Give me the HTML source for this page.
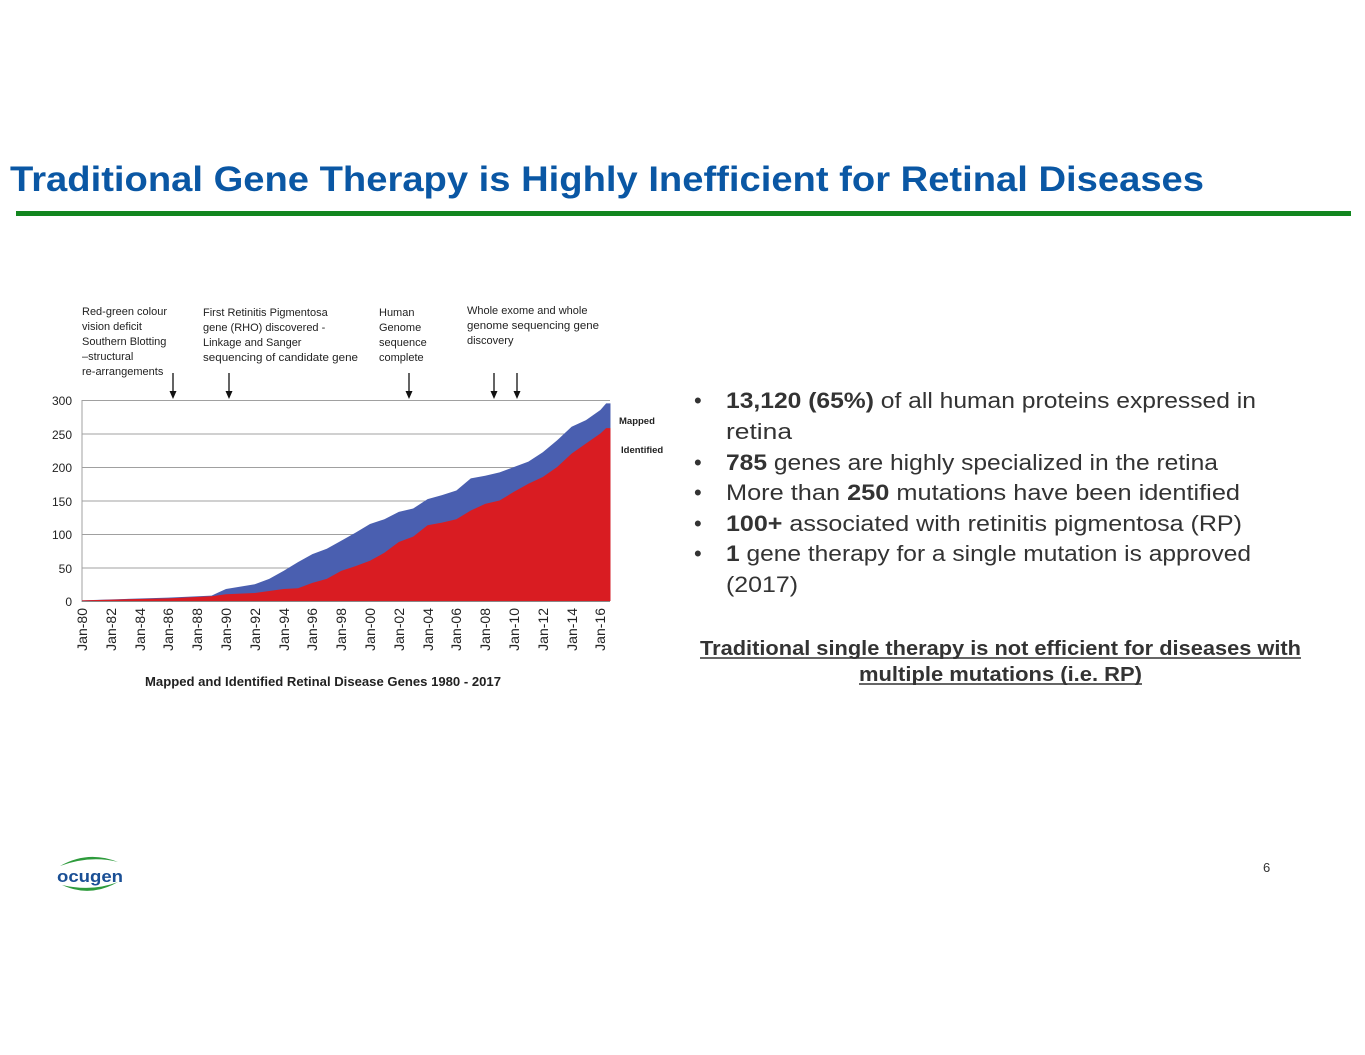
<!DOCTYPE html>
<html><head><meta charset="utf-8"><style>
html,body{margin:0;padding:0;background:#fff;}
svg{display:block;}
text{font-family:"Liberation Sans",sans-serif;}
</style></head><body>
<svg width="1365" height="1055" viewBox="0 0 1365 1055" xmlns="http://www.w3.org/2000/svg">
<text x="10" y="191" font-size="35" font-weight="bold" fill="#0a57a4" textLength="1194" lengthAdjust="spacingAndGlyphs">Traditional Gene Therapy is Highly Inefficient for Retinal Diseases</text>
<rect x="16" y="211" width="1335" height="5" fill="#12861f"/>

<g font-size="11" fill="#222">
<text x="82" y="315">Red-green colour</text>
<text x="82" y="330">vision deficit</text>
<text x="82" y="345">Southern Blotting</text>
<text x="82" y="360">–structural</text>
<text x="82" y="375">re-arrangements</text>
<text x="203" y="316">First Retinitis Pigmentosa</text>
<text x="203" y="331">gene (RHO) discovered -</text>
<text x="203" y="346">Linkage and Sanger</text>
<text x="203" y="361" textLength="155" lengthAdjust="spacingAndGlyphs">sequencing of candidate gene</text>
<text x="379" y="316">Human</text>
<text x="379" y="331">Genome</text>
<text x="379" y="346">sequence</text>
<text x="379" y="361">complete</text>
<text x="467" y="314">Whole exome and whole</text>
<text x="467" y="329" textLength="132" lengthAdjust="spacingAndGlyphs">genome sequencing gene</text>
<text x="467" y="344">discovery</text>
</g>
<g stroke="#111" stroke-width="1.3" fill="#111">
<line x1="173" y1="373" x2="173" y2="394"/><path d="M169.5 391 L173 399 L176.5 391Z" stroke="none"/>
<line x1="229" y1="373" x2="229" y2="394"/><path d="M225.5 391 L229 399 L232.5 391Z" stroke="none"/>
<line x1="409" y1="373" x2="409" y2="394"/><path d="M405.5 391 L409 399 L412.5 391Z" stroke="none"/>
<line x1="494" y1="373" x2="494" y2="394"/><path d="M490.5 391 L494 399 L497.5 391Z" stroke="none"/>
<line x1="517" y1="373" x2="517" y2="394"/><path d="M513.5 391 L517 399 L520.5 391Z" stroke="none"/>
</g>

<g stroke="#a0a0a0" stroke-width="1">
<line x1="82" y1="400.5" x2="610" y2="400.5"/>
<line x1="82" y1="434" x2="610" y2="434"/>
<line x1="82" y1="467.5" x2="610" y2="467.5"/>
<line x1="82" y1="501" x2="610" y2="501"/>
<line x1="82" y1="534.5" x2="610" y2="534.5"/>
<line x1="82" y1="568" x2="610" y2="568"/>
<line x1="82" y1="400" x2="82" y2="602"/>
</g>
<g transform="translate(82,601) scale(14.4,-0.67)">
<path fill="#4a5fb0" d="M0 0 L0 1 L6 5 L9 8 L9.5 13 L10 18 L12 25 L13 33 L14 45 L15 58 L16 70 L17 78 L18 90 L19 102 L20 115 L21 122 L22 133 L23 138 L24 152 L25 158 L26 165 L27 183 L28 187 L29 192 L30 200 L31 208 L32 222 L33 240 L34 260 L35 270 L36 285 L36.4 295 L36.7 295 L36.7 0 Z"/>
<path fill="#d91c22" d="M0 0 L0 1 L6 4 L9 7 L10 10 L12 12 L13 15 L14 18 L15 19 L16 27 L17 33 L18 45 L19 52 L20 60 L21 72 L22 88 L23 96 L24 113 L25 117 L26 122 L27 135 L28 145 L29 150 L30 163 L31 175 L32 185 L33 200 L34 220 L35 235 L36 250 L36.4 258 L36.7 258 L36.7 0 Z"/>
</g>
<line x1="82" y1="601.5" x2="610" y2="601.5" stroke="#888"/>
<g font-size="12" fill="#222" text-anchor="end">
<text x="72" y="405">300</text><text x="72" y="439">250</text><text x="72" y="472">200</text>
<text x="72" y="506">150</text><text x="72" y="539">100</text><text x="72" y="573">50</text><text x="72" y="606">0</text>
</g>
<g font-size="9.5" font-weight="bold" fill="#222">
<text x="619" y="424">Mapped</text><text x="621" y="453">Identified</text>
</g>
<g font-size="14" fill="#222" text-anchor="end">
<text transform="translate(87,608) rotate(-90)">Jan-80</text>
<text transform="translate(116,608) rotate(-90)">Jan-82</text>
<text transform="translate(145,608) rotate(-90)">Jan-84</text>
<text transform="translate(173,608) rotate(-90)">Jan-86</text>
<text transform="translate(202,608) rotate(-90)">Jan-88</text>
<text transform="translate(231,608) rotate(-90)">Jan-90</text>
<text transform="translate(260,608) rotate(-90)">Jan-92</text>
<text transform="translate(289,608) rotate(-90)">Jan-94</text>
<text transform="translate(317,608) rotate(-90)">Jan-96</text>
<text transform="translate(346,608) rotate(-90)">Jan-98</text>
<text transform="translate(375,608) rotate(-90)">Jan-00</text>
<text transform="translate(404,608) rotate(-90)">Jan-02</text>
<text transform="translate(433,608) rotate(-90)">Jan-04</text>
<text transform="translate(461,608) rotate(-90)">Jan-06</text>
<text transform="translate(490,608) rotate(-90)">Jan-08</text>
<text transform="translate(519,608) rotate(-90)">Jan-10</text>
<text transform="translate(548,608) rotate(-90)">Jan-12</text>
<text transform="translate(577,608) rotate(-90)">Jan-14</text>
<text transform="translate(605,608) rotate(-90)">Jan-16</text>
</g>
<text x="145" y="686" font-size="12.5" font-weight="bold" fill="#222" textLength="356" lengthAdjust="spacingAndGlyphs">Mapped and Identified Retinal Disease Genes 1980 - 2017</text>

<g font-size="22" fill="#333">
<text x="694" y="408">•</text><text x="694" y="470">•</text><text x="694" y="500">•</text><text x="694" y="531">•</text><text x="694" y="561">•</text>
<text x="726" y="408" textLength="530" lengthAdjust="spacingAndGlyphs"><tspan font-weight="bold">13,120 (65%)</tspan> of all human proteins expressed in</text>
<text x="726" y="439" textLength="66" lengthAdjust="spacingAndGlyphs">retina</text>
<text x="726" y="470" textLength="492" lengthAdjust="spacingAndGlyphs"><tspan font-weight="bold">785</tspan> genes are highly specialized in the retina</text>
<text x="726" y="500" textLength="514" lengthAdjust="spacingAndGlyphs">More than <tspan font-weight="bold">250</tspan> mutations have been identified</text>
<text x="726" y="531" textLength="516" lengthAdjust="spacingAndGlyphs"><tspan font-weight="bold">100+</tspan> associated with retinitis pigmentosa (RP)</text>
<text x="726" y="561" textLength="525" lengthAdjust="spacingAndGlyphs"><tspan font-weight="bold">1</tspan> gene therapy for a single mutation is approved</text>
<text x="726" y="592" textLength="72" lengthAdjust="spacingAndGlyphs">(2017)</text>
</g>
<g font-size="20" font-weight="bold" fill="#333">
<text x="700" y="655" textLength="601" lengthAdjust="spacingAndGlyphs">Traditional single therapy is not efficient for diseases with</text>
<text x="859" y="681" textLength="283" lengthAdjust="spacingAndGlyphs">multiple mutations (i.e. RP)</text>
</g>
<line x1="700" y1="658" x2="1301" y2="658" stroke="#333" stroke-width="1.5"/>
<line x1="859" y1="684" x2="1142" y2="684" stroke="#333" stroke-width="1.5"/>

<path d="M60 866 Q88 850 118 862 Q90 855 60 866Z" fill="#2e9b3c"/>
<path d="M62 885 Q90 898 118 882 Q92 892 62 885Z" fill="#2e9b3c"/>
<text x="57" y="882" font-size="17" font-weight="bold" fill="#1a4f95" textLength="66" lengthAdjust="spacingAndGlyphs">ocugen</text>
<text x="1263" y="872" font-size="13" fill="#333">6</text>
</svg>
</body></html>
